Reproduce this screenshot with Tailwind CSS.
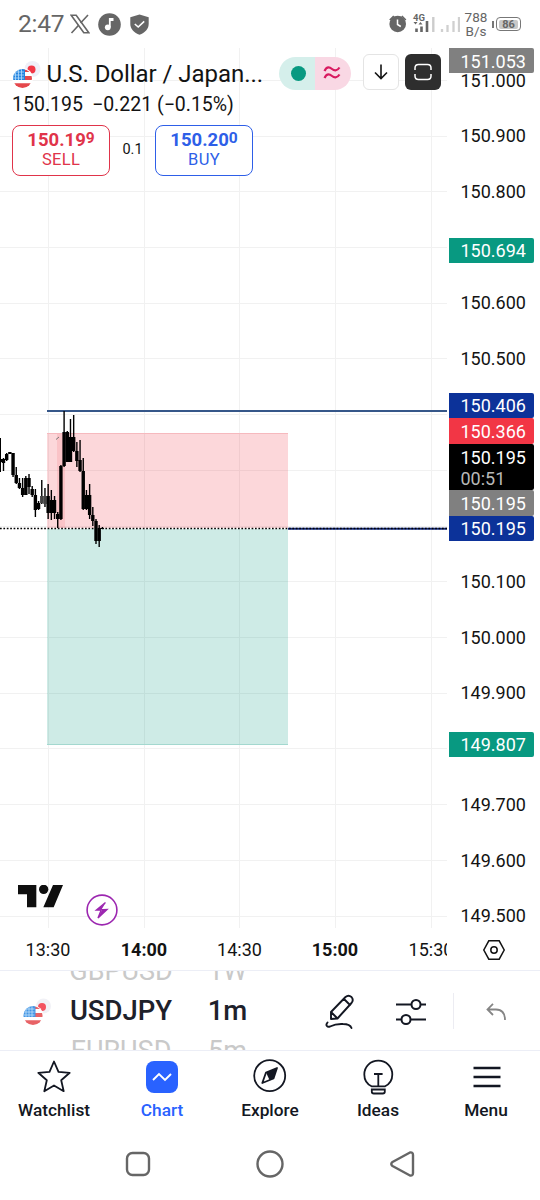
<!DOCTYPE html>
<html lang="en">
<head>
  <meta charset="UTF-8">
  <meta name="viewport" content="width=device-width, initial-scale=1.0">
  <title>USDJPY Chart</title>
  <script src="https://cdn.jsdelivr.net/npm/@tailwindcss/browser@4"></script>
</head>
<body class="bg-white">
  <div class="w-[540px] h-[1200px] flex flex-col overflow-hidden bg-white font-['Roboto',sans-serif] text-[#131313]">

    <!-- Status bar -->
    <div class="h-12 shrink-0 flex items-center justify-between pl-[18px] pr-[19px] text-[#666]">
      <div class="flex items-center">
        <span class="w-[52px] text-[24.5px] leading-none tracking-[-0.2px]">2:47</span>
        <svg class="w-[20px] h-[20px]" viewBox="0 0 20 20" fill="none" stroke="#666">
          <path d="M1.2 1.2h5l12.6 17.6h-5z" stroke-width="1.6"/>
          <path d="M18 1l-7.4 8M8.6 11.2L1.5 19" stroke-width="1.6"/>
        </svg>
        <svg class="ml-2 w-[23px] h-[23px]" viewBox="0 0 23 23">
          <circle cx="11.5" cy="11.5" r="11.3" fill="#666"/>
          <circle cx="9.800" cy="14.300" r="2.900" fill="#fff"/>
          <path d="M10.900 14.300V5h4.600v3h-2.800v6.300z" fill="#fff"/>
        </svg>
        <svg class="ml-[9px] w-[19px] h-[21px]" viewBox="0 0 19 21">
          <path d="M9.5.5L18.700 3.200V10c0 5-3.800 8.800-9.200 10.700C4.100 18.800.3 15 .3 10V3.200z" fill="#666"/>
          <path d="M4.800 10l3.400 3 6-5.600" fill="none" stroke="#fff" stroke-width="1.600"/>
        </svg>
      </div>
      <div class="flex items-center">
        <svg class="w-[72px] h-[24px]" viewBox="387 12 72 24">
          <circle cx="396.700" cy="24" r="8.300" fill="#666"/>
          <path d="M396.500 19.500v5l3.300 2" fill="none" stroke="#fff" stroke-width="1.500"/>
          <path d="M388.800 20l4-4M404.800 20l-4-4" stroke="#666" stroke-width="1.700"/>
          <text x="412" y="20.500" font-size="9.500" font-weight="700" fill="#666">4G</text>
          <path d="M412.500 22h4l-2 2.500zM417.500 24.500h4l-2-2.500z" fill="#666"/>
          <path d="M415.500 32v-3.500M420.500 32v-5.500M426 32V21" stroke="#666" stroke-width="2.600"/>
          <path d="M432.300 32V17" stroke="#ccc" stroke-width="2.400"/>
          <path d="M441 32v-3M446.500 32v-7M452.500 32V21M458 32V17" stroke="#d0d0d0" stroke-width="2.300"/>
        </svg>
        <div class="w-[26px] ml-[3px] text-center text-[13.500px] leading-[14.500px]">788<br>B/s</div>
        <div class="ml-[3px] w-[2px] h-[7px] bg-[#777]"></div>
        <div class="ml-[2px] w-[25px] h-[14px] rounded-[4px] border border-[#777] p-[1.500px]">
          <div class="w-[19px] h-full mx-auto bg-[#c8c8c8] rounded-xs text-center text-[11px] leading-[10px] font-bold">86</div>
        </div>
      </div>
    </div>

    <!-- Chart -->
    <div class="relative h-[922px] shrink-0 flex">
      <div class="w-[447px] flex flex-col">
        <svg class="w-[447px] h-[880px]" viewBox="0 48 447 880">
          <path d="M48.500 48V928M144.500 48V928M239.500 48V928M335.500 48V928M431.500 48V928M0 80.500H447M0 136.500H447M0 191.500H447M0 247.500H447M0 303.500H447M0 358.500H447M0 414.500H447M0 470.500H447M0 526.500H447M0 581.500H447M0 637.500H447M0 693.500H447M0 748.500H447M0 804.500H447M0 860.500H447M0 916.500H447" stroke="#f1f1f1"/>
          <rect x="47" y="433" width="241" height="95" fill="#f23645" fill-opacity=".2"/>
          <rect x="57" y="433" width="8" height="95" fill="#f23645" fill-opacity=".12"/>
          <path d="M47 433.500H288" stroke="#f6b9be"/>
          <rect x="47" y="529" width="241" height="216" fill="#089981" fill-opacity=".2"/>
          <path d="M47 744.500H288" stroke="#a3d8cf"/>
          <path d="M56 439.500l3-2.500" stroke="#777"/>
          <path d="M47 411H447" stroke="#365789" stroke-width="2"/>
          <path d="M288 528.700H447" stroke="#12287c" stroke-width="2"/>
          <path d="M0 528.500H447" stroke="#000" stroke-width="1.400" stroke-dasharray="1.700 1.700"/>
          <g id="candles"></g>
        </svg>
        <div class="relative flex h-[42px] w-[447px] overflow-hidden text-[18px] leading-[44px]">
          <div class="w-24 shrink-0 text-center">13:30</div>
          <div class="w-24 shrink-0 text-center font-bold">14:00</div>
          <div class="w-[95px] shrink-0 text-center">14:30</div>
          <div class="w-24 shrink-0 text-center font-bold">15:00</div>
          <div class="w-24 shrink-0 text-center">15:30</div>
        </div>
      </div>

      <!-- Price scale -->
      <div class="relative w-[93px] pt-[4.500px] pl-[13.500px] text-[18px]">
        <div class="h-[55.730px] leading-[56px]">151.000</div>
        <div class="h-[55.730px] leading-[56px]">150.900</div>
        <div class="h-[55.730px] leading-[56px]">150.800</div>
        <div class="h-[55.730px]"></div>
        <div class="h-[55.730px] leading-[56px]">150.600</div>
        <div class="h-[55.730px] leading-[56px]">150.500</div>
        <div class="h-[167.190px]"></div>
        <div class="h-[55.730px] leading-[56px]">150.100</div>
        <div class="h-[55.730px] leading-[56px]">150.000</div>
        <div class="h-[55.730px] leading-[56px]">149.900</div>
        <div class="h-[55.730px]"></div>
        <div class="h-[55.730px] leading-[56px]">149.700</div>
        <div class="h-[55.730px] leading-[56px]">149.600</div>
        <div class="h-[55.730px] leading-[56px]">149.500</div>
        <svg class="-mt-[5.500px] ml-[21px] w-[24px] h-[22px]" viewBox="0 0 24 22" fill="none" stroke="#131313" stroke-width="1.500">
          <path d="M6.800 1.800h10.400l5 9.200-5 9.200H6.800L1.800 11z"/>
          <circle cx="12" cy="11" r="3.200"/>
        </svg>

        <div class="absolute left-[2px] top-0 w-[85px] h-[25px] rounded-r-xs bg-[#808080] text-white pl-[11.500px] leading-[27px]">151.053</div>
        <div class="absolute left-[2px] top-[190px] w-[85px] h-[25px] rounded-r-xs bg-[#089981] text-white pl-[11.500px] leading-[26px]">150.694</div>
        <div class="absolute left-[2px] top-[345px] w-[85px] text-white *:rounded-r-xs *:pl-[11.500px]">
          <div class="h-[25px] leading-[26px] bg-[#0c3299]">150.406</div>
          <div class="h-[26px] leading-[27px] bg-[#f23645]">150.366</div>
          <div class="h-[46px] pt-[3px] leading-[21px] bg-black">150.195<div class="text-[#b8b8b8]">00:51</div></div>
          <div class="h-[26px] leading-[27px] bg-[#808080]">150.195</div>
          <div class="h-[25px] leading-[26px] bg-[#0c3299]">150.195</div>
        </div>
        <div class="absolute left-[2px] top-[684px] w-[85px] h-[25px] rounded-r-xs bg-[#089981] text-white pl-[11.500px] leading-[26px]">149.807</div>
      </div>

      <!-- Symbol header over the plot -->
      <div class="absolute left-3 top-[6px] w-[429px]">
        <div class="flex items-center h-[36px]">
          <svg class="w-[29px] h-[29px] mt-[6px] shrink-0" viewBox="0 0 29 29">
            <defs><clipPath id="us"><circle cx="10.500" cy="17.500" r="9.500"/></clipPath></defs>
            <circle cx="20.500" cy="8" r="8" fill="#efeff8"/>
            <circle cx="19.500" cy="8.500" r="4" fill="#f23645"/>
            <circle cx="10.500" cy="17.500" r="10.500" fill="#fff"/>
            <g clip-path="url(#us)">
              <path d="M0 7h22v22H0z" fill="#fff"/>
              <path d="M10 8.500h12v2.500H10zM10 15h12v4H10zM0 22.300h22V29H0z" fill="#e5484c"/>
              <path d="M0 7h13v12H0z" fill="#2484e0"/>
              <path d="M2 11h10M1 14h11M1 17h11M3.500 10v9M6.500 9v10M9.500 8v11" stroke="#b5dcfa" stroke-width=".8"/>
            </g>
          </svg>
          <div class="ml-[5.500px] mt-[4px] w-[222px] shrink-0 text-[24px] tracking-[-0.05px] whitespace-nowrap">U.S. Dollar / Japan...</div>
          <div class="ml-[10.500px] mt-[2px] w-[72px] h-[33px] flex shrink-0 rounded-full overflow-hidden">
            <div class="w-[36px] bg-[#d5efeb] flex items-center justify-center pl-[3px]"><div class="size-[15px] rounded-full bg-[#089981]"></div></div>
            <div class="w-[36px] bg-[#f9d8e4] flex items-center pl-[8px]">
              <svg class="w-[18px] h-[14px]" viewBox="0 0 18 14" fill="none" stroke="#d81b60" stroke-width="2.200"><path d="M1.500 5C4-.5 7 1.300 9 3s5 2.500 7.500-1.500M1.500 12c2.500-5.500 5.500-3.700 7.500-2s5 2.500 7.500-1.500"/></svg>
            </div>
          </div>
          <div class="ml-[12px] w-[36px] h-[36px] shrink-0 rounded-[6px] border border-[#e4e4e4] bg-white flex items-center justify-center">
            <svg class="w-[14px] h-[16px]" viewBox="0 0 14 16" fill="none" stroke="#131313" stroke-width="1.600"><path d="M7 .5V14M1 8.500l6 6 6-6"/></svg>
          </div>
          <div class="ml-[6px] w-[36px] h-[36px] shrink-0 rounded-[6px] bg-[#2e2e2e] flex items-center justify-center">
            <svg class="w-[18px] h-[18px]" viewBox="0 0 18 18" fill="none" stroke="#fff" stroke-width="1.500"><path d="M1 7V5q0-3.500 3.500-3.500h9Q17 1.500 17 5v2M1 11v2q0 3.500 3.500 3.500h9Q17 16.500 17 13v-2"/></svg>
          </div>
        </div>
        <div class="mt-[3px] h-[24px] flex text-[19.500px] leading-[24px] whitespace-pre"><span class="w-[80px]">150.195</span><span>−0.221 (−0.15%)</span></div>
        <div class="mt-[7.500px] flex items-center">
          <div class="w-[98px] h-[51px] rounded-[8px] border-[1.500px] border-[#e0344a] bg-white text-[#e0344a] text-center leading-[20px] pt-[4px]">
            <div class="text-[18.500px] font-bold">150.19<span class="text-[15.500px] relative -top-[3px]">9</span></div>
            <div class="text-[16.500px] -mt-px tracking-[.3px]">SELL</div>
          </div>
          <div class="w-[45px] text-center text-[14.500px]">0.1</div>
          <div class="w-[98px] h-[51px] rounded-[8px] border-[1.500px] border-[#2e5fe8] bg-white text-[#2e5fe8] text-center leading-[20px] pt-[4px]">
            <div class="text-[18.500px] font-bold">150.20<span class="text-[15.500px] relative -top-[3px]">0</span></div>
            <div class="text-[16.500px] -mt-px tracking-[.3px]">BUY</div>
          </div>
        </div>
      </div>

      <!-- Logo and event marker -->
      <svg class="absolute left-[18px] top-[837px] w-[45px] h-[23px]" viewBox="53 45 135 69" fill="#0f0f0f">
        <path d="M53 45h55v67H80V73H53zM158 45h30l-28 67h-31z"/><circle cx="130" cy="58" r="14"/>
      </svg>
      <svg class="absolute left-[86px] top-[845.500px] w-8 h-8" viewBox="0 0 32 32" fill="none" stroke="#9c27b0">
        <circle cx="16" cy="16" r="14.900" fill="#fff" stroke-width="1.600"/>
        <path d="M19.500 8.500l-9 7.500 10.500-.5-9 8.500 3-7.500" stroke-width="1.400"/><path d="M19.500 9L11 15.500h4.500zM12.500 23l8.500-7.200h-5z" fill="#9c27b0" stroke="none"/>
      </svg>
    </div>

    <!-- Symbol / interval picker -->
    <div class="h-[81px] shrink-0 border-y-[1.500px] border-[#eceef6] flex items-center overflow-hidden text-[#1e212b]">
      <svg class="ml-[23px] w-[29px] h-[29px] mt-[3px] shrink-0 opacity-85" viewBox="0 0 29 29">
        <circle cx="20.500" cy="8" r="7.500" fill="#efeff5"/>
        <circle cx="19" cy="9" r="4" fill="#f23645"/>
        <circle cx="10" cy="17.500" r="10.300" fill="#fff"/>
        <g transform="translate(-.5 0)" clip-path="url(#us)">
          <path d="M0 7h22v22H0z" fill="#fff"/>
          <path d="M10 8.500h12v2.500H10zM10 15h12v4H10zM0 22.300h22V29H0z" fill="#e5484c"/>
          <path d="M0 7h13v12H0z" fill="#2484e0"/>
          <path d="M2 11h10M1 14h11M1 17h11M3.500 10v9M6.500 9v10M9.500 8v11" stroke="#b5dcfa" stroke-width=".8"/>
        </g>
      </svg>
      <div class="w-[138px] shrink-0 flex flex-col items-center justify-center text-[27px] leading-10">
        <div class="text-[#c9c9c9] h-10">GBPUSD</div>
        <div class="text-[27.500px] font-medium h-10">USDJPY</div>
        <div class="text-[#c9c9c9] h-10">EURUSD</div>
      </div>
      <div class="w-[75px] shrink-0 flex flex-col items-center justify-center text-[27px] leading-10">
        <div class="text-[#c9c9c9] h-10">1W</div>
        <div class="text-[27.500px] font-medium h-10">1m</div>
        <div class="text-[#c9c9c9] h-10">5m</div>
      </div>
      <svg class="ml-[60px] w-[30px] h-[36px]" viewBox="325 992 30 36" fill="none" stroke="#131722" stroke-width="1.900" stroke-linejoin="round" stroke-linecap="round">
        <path d="M331 1018v-7l14.500-15q3-2.500 6 0 2.500 3 0 6L337.500 1017.500zM331 1011l6.500 6.500M344 998l6 6"/>
        <path d="M327.500 1021.500c-2.500 3 0 5 2.500 4 5-2.500 8-2.800 13-2.500q7 0 8.500 4"/>
      </svg>
      <svg class="ml-[41px] mt-[2px] w-[30px] h-[26px]" viewBox="0 0 30 26" fill="none" stroke="#131722" stroke-width="2">
        <path d="M0 5.500h15.500M24.500 5.500H30M0 20.500h5.500M14.500 20.500H30"/><circle cx="20" cy="5.500" r="4.500"/><circle cx="10" cy="20.500" r="4.500"/>
      </svg>
      <div class="ml-[27px] w-px h-[36px] bg-[#ececf2]"></div>
      <svg class="ml-[32px] mt-[2px] w-[21px] h-[18px]" viewBox="0 0 21 18" fill="none" stroke="#858585" stroke-width="1.800"><path d="M7 .8L1.500 6.500 7 12M1.500 6.500H10q9 0 9 10.500"/></svg>
    </div>

    <!-- Bottom navigation -->
    <div class="h-[76px] shrink-0 grid grid-cols-5 text-center text-[17.300px] font-medium text-[#131722]">
      <div class="flex flex-col items-center pt-[8px]">
        <svg class="w-[34px] h-[34px]" viewBox="0 0 34 34" fill="none" stroke="#131722" stroke-width="1.800" stroke-linejoin="round"><path d="M17 2.500l4.500 10.300 11.200 1-8.500 7.400 2.500 11L17 26.500l-9.700 5.700 2.500-11L1.300 13.800l11.200-1z"/></svg>
        <div class="mt-[5px] leading-6">Watchlist</div>
      </div>
      <div class="flex flex-col items-center pt-[8px] text-[#2962ff]">
        <svg class="w-[34px] h-[34px]" viewBox="0 0 34 34"><rect x="1" y="2" width="32" height="32" rx="8" fill="#2962ff"/><path d="M8 21l6-6 6 6 6-6" fill="none" stroke="#fff" stroke-width="1.900"/></svg>
        <div class="mt-[5px] leading-6">Chart</div>
      </div>
      <div class="flex flex-col items-center pt-[8px]">
        <svg class="w-[34px] h-[34px]" viewBox="0 0 34 34"><circle cx="16.700" cy="16.700" r="15.500" fill="none" stroke="#131722" stroke-width="1.800"/><path d="M9.300 24l3.700-10.500 11-4.500-3.500 10.500z" fill="none" stroke="#131722" stroke-width="1.800" stroke-linejoin="round"/><path d="M13 13.500l11-4.500-3.500 10.500-4 1.500z" fill="#131722"/></svg>
        <div class="mt-[5px] leading-6">Explore</div>
      </div>
      <div class="flex flex-col items-center pt-[8px]">
        <svg class="w-[34px] h-[36px]" viewBox="0 0 34 36" fill="none" stroke="#131722" stroke-width="1.800"><path d="M10.500 27.300C6 25 3.300 20.500 3.300 15.500 3.300 7.500 9.500 1.700 17.300 1.700S31.300 7.500 31.300 15.500c0 5-2.700 9.500-7.200 11.800zM13 15h8.600M17.300 15v12M10.800 30.500h13v2.300q0 1.700-2 1.700h-9q-2 0-2-1.700z"/></svg>
        <div class="mt-[3px] leading-6">Ideas</div>
      </div>
      <div class="flex flex-col items-center pt-[8px]">
        <svg class="w-[34px] h-[34px]" viewBox="0 0 34 34" stroke="#131722" stroke-width="2.600"><path d="M4.500 9h27M4.500 18h27M4.500 27h27"/></svg>
        <div class="mt-[5px] leading-6">Menu</div>
      </div>
    </div>

    <!-- System buttons -->
    <div class="h-[73px] shrink-0 flex items-center justify-center gap-[105px]">
      <svg class="w-[26px] h-[28px]" viewBox="0 0 26 28" fill="none" stroke="#666" stroke-width="2.400"><rect x="2" y="3" width="22" height="22" rx="5.500"/></svg>
      <svg class="w-[28px] h-[28px]" viewBox="0 0 28 28" fill="none" stroke="#666" stroke-width="2.400"><circle cx="14" cy="14" r="12.500"/></svg>
      <svg class="w-[26px] h-[28px]" viewBox="0 0 26 28" fill="none" stroke="#666" stroke-width="2.400" stroke-linejoin="round"><path d="M21 2.500L3.500 12q-2.500 2 0 4L21 25.500q3 .5 3-2.500V5q0-3-3-2.500z"/></svg>
    </div>
  </div>

  <script>
    // high, low, body top, body bottom
    const candles = [
      [438, 472, 459, 462], [458, 471, 459, 463], [453, 461, 454, 460], [452, 454, 452, 454],
      [453, 477, 453, 475], [467, 484, 475, 483], [478, 489, 483, 488], [478, 497, 488, 495],
      [476, 495, 478, 495], [474, 494, 478, 487], [486, 497, 489, 495], [489, 517, 495, 510],
      [501, 510, 503, 509], [480, 504, 496, 503], [488, 507, 496, 504], [484, 519, 496, 513],
      [490, 520, 500, 513], [496, 519, 500, 513], [512, 528, 514, 519], [465, 520, 466, 519],
      [411, 467, 432, 466], [431, 462, 432, 462], [419, 462, 437, 462], [415, 452, 437, 451],
      [442, 467, 451, 461], [440, 472, 460, 471], [458, 510, 471, 509], [490, 510, 495, 509],
      [484, 519, 495, 515], [507, 526, 515, 521], [519, 544, 521, 541], [525, 547, 528, 541],
      [527, 529, 528, 529]
    ];
    const step = 3.19;
    const ns = 'http://www.w3.org/2000/svg';
    const group = document.getElementById('candles');

    function addRect(x, y, width, height, fill) {
      const rect = document.createElementNS(ns, 'rect');
      rect.setAttribute('x', x);
      rect.setAttribute('y', y);
      rect.setAttribute('width', width);
      rect.setAttribute('height', height);
      rect.setAttribute('fill', fill);
      group.appendChild(rect);
    }

    candles.forEach(([high, low, top, bottom], i) => {
      const x = 0.3 + i * step;
      const fill = i === 13 || i === 14 ? '#444' : '#000';
      addRect(x - 0.7, high, 1.4, low - high, '#000');
      addRect(x - 1.7, top, 3.4, bottom - top, fill);
    });
  </script>
</body>
</html>
